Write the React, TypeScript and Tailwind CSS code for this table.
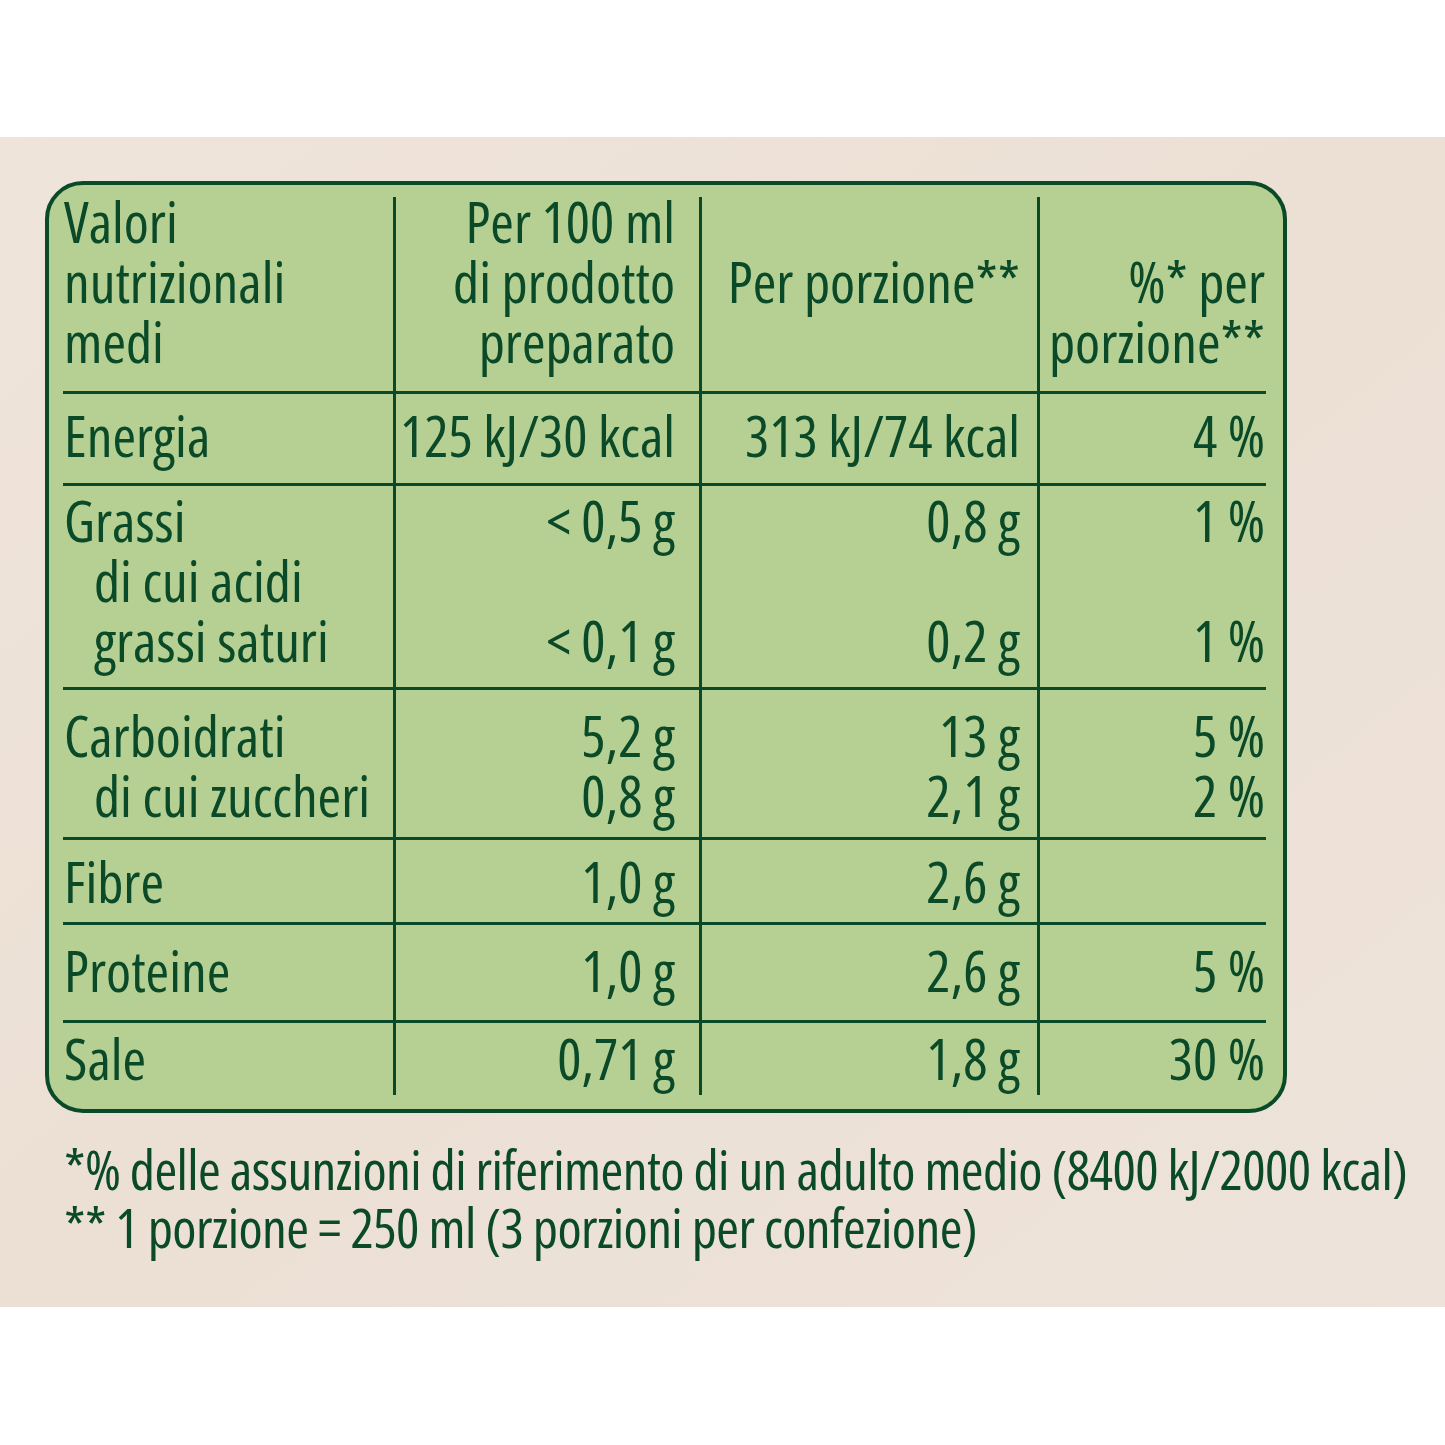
type Row = {
  pad: string;
  h: string;
  label: React.ReactNode;
  per100: React.ReactNode;
  portion: React.ReactNode;
  pct: React.ReactNode;
};

const rows: Row[] = [
  {
    pad: 'pt-[11px]',
    h: 'h-[92px]',
    label: 'Energia',
    per100: '125 kJ/30 kcal',
    portion: '313 kJ/74 kcal',
    pct: '4 %',
  },
  {
    pad: 'pt-[4px]',
    h: 'h-[204px]',
    label: (
      <>
        <div>Grassi</div>
        <div className="pl-[30px]">di cui acidi</div>
        <div className="pl-[30px]">grassi saturi</div>
      </>
    ),
    per100: (
      <>
        <div>&lt; 0,5 g</div>
        <div>&nbsp;</div>
        <div>&lt; 0,1 g</div>
      </>
    ),
    portion: (
      <>
        <div>0,8 g</div>
        <div>&nbsp;</div>
        <div>0,2 g</div>
      </>
    ),
    pct: (
      <>
        <div>1 %</div>
        <div>&nbsp;</div>
        <div>1 %</div>
      </>
    ),
  },
  {
    pad: 'pt-[15px]',
    h: 'h-[150px]',
    label: (
      <>
        <div>Carboidrati</div>
        <div className="pl-[30px]">di cui zuccheri</div>
      </>
    ),
    per100: (
      <>
        <div>5,2 g</div>
        <div>0,8 g</div>
      </>
    ),
    portion: (
      <>
        <div>13 g</div>
        <div>2,1 g</div>
      </>
    ),
    pct: (
      <>
        <div>5 %</div>
        <div>2 %</div>
      </>
    ),
  },
  { pad: 'pt-[11px]', h: 'h-[85px]', label: 'Fibre', per100: '1,0 g', portion: '2,6 g', pct: '' },
  { pad: 'pt-[15px]', h: 'h-[98px]', label: 'Proteine', per100: '1,0 g', portion: '2,6 g', pct: '5 %' },
  { pad: 'pt-[5px]', h: 'h-[75px]', label: 'Sale', per100: '0,71 g', portion: '1,8 g', pct: '30 %' },
];

function DataRow({ row }: { row: Row }) {
  return (
    <div className={`grid grid-cols-[330px_306px_338px_229px] border-t-[3px] border-[#0b4a28] ${row.h}`}>
      <div className={`pl-[1px] ${row.pad}`}>{row.label}</div>
      <div className={`border-l-[3px] border-[#0b4a28] pr-[24px] text-right ${row.pad}`}>{row.per100}</div>
      <div className={`border-l-[3px] border-[#0b4a28] pr-[17px] text-right ${row.pad}`}>{row.portion}</div>
      <div className={`border-l-[3px] border-[#0b4a28] pr-[1px] text-right ${row.pad}`}>{row.pct}</div>
    </div>
  );
}

export default function App() {
  return (
    <div className="w-[1445px] h-[1445px] bg-white pt-[137px] font-['Open_Sans',sans-serif] font-stretch-[75%] text-[57px] leading-[60px] text-[#0b4a28]">
      <div className="h-[1170px] bg-[#eee2d8] bg-gradient-to-br from-[#efe4da] via-[#ece0d5] to-[#eee3da] pt-[44px] pl-[45px]">
        <div className="w-[1242px] h-[932px] border-4 border-[#0b4a28] rounded-[38px] bg-[#b6d093] pt-[12px] pl-[14px] pr-[17px] pb-[14px]">
          {/* header */}
          <div className="grid grid-cols-[330px_306px_338px_229px] h-[194px]">
            <div className="pl-[1px]">
              <div className="-mt-[6px]">
                <div>Valori</div>
                <div>nutrizionali</div>
                <div>medi</div>
              </div>
            </div>
            <div className="border-l-[3px] border-[#0b4a28] pr-[24px] text-right">
              <div className="-mt-[6px]">
                <div>Per 100 ml</div>
                <div>di prodotto</div>
                <div>preparato</div>
              </div>
            </div>
            <div className="border-l-[3px] border-[#0b4a28] pr-[17px] text-right pt-[54px]">
              <div>Per porzione**</div>
            </div>
            <div className="border-l-[3px] border-[#0b4a28] pr-[1px] text-right pt-[54px]">
              <div>%* per</div>
              <div>porzione**</div>
            </div>
          </div>
          {rows.map((r, i) => (
            <DataRow key={i} row={r} />
          ))}
        </div>
        <div className="mt-[27px] pl-[19px] text-[55px] leading-[58px] tracking-[-0.6px] whitespace-nowrap">
          <div>*% delle assunzioni di riferimento di un adulto medio (8400 kJ/2000 kcal)</div>
          <div>** 1 porzione = 250 ml (3 porzioni per confezione)</div>
        </div>
      </div>
    </div>
  );
}
